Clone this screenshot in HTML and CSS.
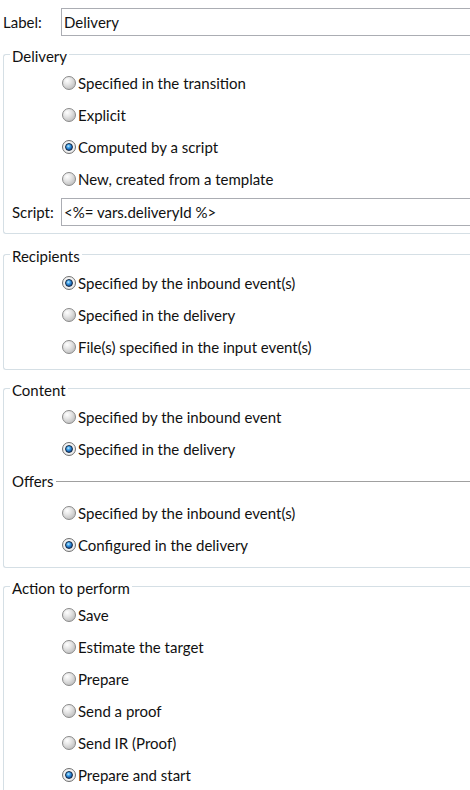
FILE: index.html
```html
<!DOCTYPE html>
<html>
<head>
<meta charset="utf-8">
<link rel="stylesheet" href="styles.css">
</head>
<body>
<div class="page">
  <div class="label-row">
    <span class="field-label">Label:</span>
    <div class="textbox">Delivery</div>
  </div>

  <fieldset class="group g-delivery">
    <legend>Delivery</legend>
    <div class="opt"><span class="radio"></span><span>Specified in the transition</span></div>
    <div class="opt"><span class="radio"></span><span>Explicit</span></div>
    <div class="opt"><span class="radio on"></span><span>Computed by a script</span></div>
    <div class="opt"><span class="radio"></span><span>New, created from a template</span></div>
    <div class="script-row">
      <span class="script-label">Script:</span>
      <div class="textbox">&lt;%= vars.deliveryId %&gt;</div>
    </div>
  </fieldset>

  <fieldset class="group g-recipients">
    <legend>Recipients</legend>
    <div class="opt"><span class="radio on"></span><span>Specified by the inbound event(s)</span></div>
    <div class="opt"><span class="radio"></span><span>Specified in the delivery</span></div>
    <div class="opt"><span class="radio"></span><span>File(s) specified in the input event(s)</span></div>
  </fieldset>

  <fieldset class="group g-content">
    <legend>Content</legend>
    <div class="opt"><span class="radio"></span><span>Specified by the inbound event</span></div>
    <div class="opt"><span class="radio on"></span><span>Specified in the delivery</span></div>
    <div class="sep-row"><span>Offers</span><span class="sep-line"></span></div>
    <div class="opt"><span class="radio"></span><span>Specified by the inbound event(s)</span></div>
    <div class="opt"><span class="radio on"></span><span>Configured in the delivery</span></div>
  </fieldset>

  <fieldset class="group g-action">
    <legend>Action to perform</legend>
    <div class="opt"><span class="radio"></span><span>Save</span></div>
    <div class="opt"><span class="radio"></span><span>Estimate the target</span></div>
    <div class="opt"><span class="radio"></span><span>Prepare</span></div>
    <div class="opt"><span class="radio"></span><span>Send a proof</span></div>
    <div class="opt"><span class="radio"></span><span>Send IR (Proof)</span></div>
    <div class="opt"><span class="radio on"></span><span>Prepare and start</span></div>
  </fieldset>
</div>
</body>
</html>
```
FILE: styles.css
```css
html, body {
  margin: 0;
  padding: 0;
  background: #ffffff;
  overflow: hidden;
}

body {
  width: 470px;
  height: 790px;
  font-family: Lato, "Open Sans", sans-serif;
  font-size: 15px;
  color: #111111;
}

.page {
  width: 470px;
  padding-top: 8px;
  display: flex;
  flex-direction: column;
}

.label-row {
  display: flex;
  align-items: center;
  height: 28px;
  padding-left: 3px;
}

.field-label {
  width: 58px;
  flex: none;
}

.textbox {
  flex: 1;
  min-width: 0;
  height: 28px;
  box-sizing: border-box;
  border: 1px solid #abadb3;
  border-right: 0;
  padding-left: 2px;
  display: flex;
  align-items: center;
  background: #ffffff;
  white-space: nowrap;
}

.group {
  margin: 7px 0 0 3px;
  padding: 2px 0 6px 0;
  border: 1px solid #d5dfe5;
  border-right: 0;
  border-radius: 3px 0 0 3px;
  min-width: 0;
}

.group legend {
  margin-left: 6px;
  padding: 4px 2px 0;
  line-height: 18px;
}

.g-delivery {
  padding-bottom: 4px;
}

.g-recipients {
  margin-top: 9px;
}

.opt {
  display: flex;
  align-items: center;
  height: 32px;
  padding-left: 58px;
  gap: 2px;
  white-space: nowrap;
}

.radio {
  flex: none;
  width: 14px;
  height: 14px;
  box-sizing: border-box;
  border-radius: 50%;
  border: 1px solid #8a8a8a;
  background: radial-gradient(circle at 35% 30%, #ffffff 0%, #e6e6e6 35%, #c4c4c4 75%, #b0b0b0 100%);
  display: flex;
  align-items: center;
  justify-content: center;
}

.radio.on {
  border-color: #707070;
  background: radial-gradient(circle at 50% 45%, #ffffff 0%, #f0f0f0 60%, #cccccc 100%);
}

.radio.on::after {
  content: "";
  width: 8px;
  height: 8px;
  box-sizing: border-box;
  border-radius: 50%;
  border: 1px solid #152a44;
  background: radial-gradient(circle at 40% 35%, #c6ebff 0%, #45a8ee 30%, #1256a6 70%, #0a2d60 100%);
}

.script-row {
  display: flex;
  align-items: center;
  height: 34px;
  padding-left: 8px;
}

.script-label {
  width: 49px;
  flex: none;
}

.sep-row {
  display: flex;
  align-items: center;
  height: 32px;
  padding-left: 8px;
  gap: 2px;
}

.sep-line {
  flex: 1;
  height: 1px;
  background: #a0a0a0;
}
```
